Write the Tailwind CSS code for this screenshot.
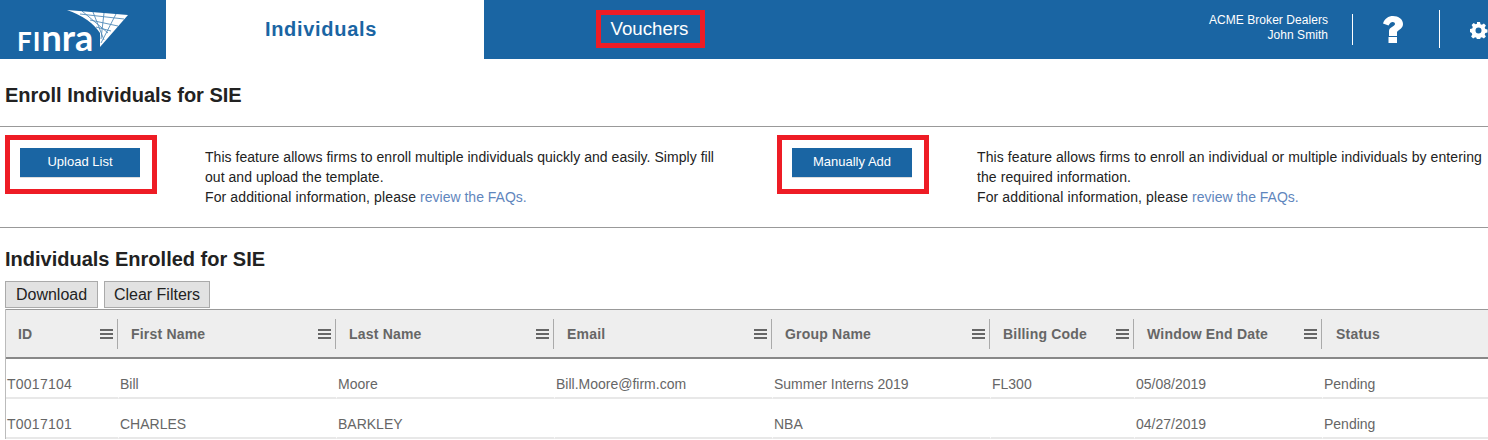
<!DOCTYPE html>
<html lang="en">
<head>
    <meta charset="UTF-8">
    <meta name="viewport" content="width=device-width, initial-scale=1.0">
    <title>Enroll Individuals for SIE</title>
    <script src="https://cdn.jsdelivr.net/npm/@tailwindcss/browser@4"></script>
</head>
<body class="bg-white w-[1488px] h-[440px] overflow-hidden font-['Liberation_Sans',Arial,sans-serif] text-[#222]">
    <!-- top nav -->
    <header class="h-[59px] bg-[#1a65a3] flex items-stretch text-white">
        <div class="w-[166px] relative">
            <span class="absolute left-[17px] top-[21px] font-['Lato',sans-serif] font-bold leading-[32px] whitespace-nowrap h-[32px] flex items-baseline"><span class="text-[26px] tracking-[1px]">FI</span><span class="text-[36px]">nra</span></span>
            <svg class="absolute left-[66px] top-[9px]" width="66" height="40" viewBox="0 0 66 40">
                <path d="M1 1 L62 6 L34 38 L34 24 Q24 9 1 1Z" fill="#fff"/>
                <g stroke="#1a65a3" stroke-width="0.9" fill="none" opacity="0.75">
                    <path d="M16 2 L42 24"/>
                    <path d="M27 3 L38 31"/>
                    <path d="M38 4 L35 30"/>
                    <path d="M50 5 L35 34"/>
                    <path d="M14 5 L58 10"/>
                    <path d="M24 11 L52 17"/>
                    <path d="M30 18 L45 22"/>
                </g>
            </svg>
        </div>
        <div class="w-[318px] bg-white flex justify-center pt-[18px] pr-[8px] text-[#1a65a3] text-[20px] leading-[23px] font-bold tracking-[0.7px]">Individuals</div>
        <div class="ml-[112px] mt-[10px] w-[109px] h-[38px] border-[5px] border-[#ee1c25] flex items-center justify-center pr-[2px] text-[18.7px]">Vouchers</div>
        <div class="ml-auto w-[160px] pt-[13px] text-right text-[12px] leading-[15px] tracking-[0.05px] mr-[160px]">
            <div>ACME Broker Dealers</div>
            <div>John Smith</div>
        </div>
    </header>
    <div class="absolute top-[14px] left-[1352px] w-px h-[31px] bg-white"></div>
    <div class="absolute top-[10px] left-[1439px] w-px h-[38px] bg-white"></div>
    <svg class="absolute top-[16px] left-[1383px]" width="20" height="27" viewBox="0 0 20 27">
        <path fill="#fff" d="M0 7.5C1.5 2.5 5.5 0 10 0c5.500 0 10 3 10 8 0 4.500-4 5.500-6 8v4H6v-5c0-4 6-4.500 6-7 0-1.200-1-2-2.300-2C8 6 7 7 5.500 9.500zM5.500 21h8.500v6H5.500z"/>
    </svg>
    <svg class="absolute top-[21px] left-[1470px]" width="18" height="18" viewBox="0 0 18 18">
        <path fill="#fff" fill-rule="evenodd" d="M7 1h3l.5 2.200 1.400.6 2-1.200 2 2-1.200 2 .6 1.400 2.200.5v3l-2.200.5-.6 1.400 1.200 2-2 2-2-1.200-1.400.6-.5 2.200H7l-.5-2.200-1.400-.6-2 1.200-2-2 1.200-2-.6-1.400L0 11V8l2.200-.5.6-1.400-1.200-2 2-2 2 1.200 1.400-.6zM8.500 6.500a3 3 0 1 0 0 6 3 3 0 0 0 0-6z"/>
    </svg>

    <main>
        <h1 class="ml-[5px] mt-[25px] text-[20px] leading-[23px] font-bold">Enroll Individuals for SIE</h1>
        <hr class="mt-[19px] border-[#999]">
        <section class="flex h-[100px]">
            <div class="w-[772px] flex">
                <div class="ml-[5px] mt-[8px] w-[152px] h-[59px] border-[5px] border-[#ee1c25] flex items-start pl-[10px] pt-[8px]">
                    <button class="w-[120px] h-[29px] pb-[1px] bg-[#1a65a3] text-white text-[13px] shadow-[0_1px_0_#ddd]">Upload List</button>
                </div>
                <p class="ml-[48px] mt-[20px] w-[515px] text-[14px] leading-[20px] tracking-[0.04px]">This feature allows firms to enroll multiple individuals quickly and easily. Simply fill out and upload the template.<br><span class="tracking-[0.12px]">For additional information, please <a href="#" class="tracking-[0px] text-[#5f86bd]">review the FAQs.</a></span></p>
            </div>
            <div class="flex-1 flex">
                <div class="ml-[5px] mt-[8px] w-[152px] h-[59px] border-[5px] border-[#ee1c25] flex items-start pl-[10px] pt-[8px]">
                    <button class="w-[120px] h-[29px] pb-[1px] bg-[#1a65a3] text-white text-[13px] shadow-[0_1px_0_#ddd]">Manually Add</button>
                </div>
                <p class="ml-[48px] mt-[20px] w-[510px] text-[14px] leading-[20px] tracking-[0.09px]">This feature allows firms to enroll an individual or multiple individuals by entering the required information.<br><span class="tracking-[0.12px]">For additional information, please <a href="#" class="tracking-[0px] text-[#5f86bd]">review the FAQs.</a></span></p>
            </div>
        </section>
        <hr class="border-[#999]">
        <h2 class="ml-[5px] mt-[20px] text-[20px] leading-[23px] font-bold">Individuals Enrolled for SIE</h2>
        <div class="ml-[5px] mt-[10px] flex gap-[6px]">
            <button class="w-[93px] h-[27px] bg-[#e2e2e2] border border-[#aaa] text-[16px] leading-[24px]">Download</button>
            <button class="w-[106px] h-[27px] bg-[#e2e2e2] border border-[#aaa] text-[16px] leading-[24px]">Clear Filters</button>
        </div>
        <!-- grid -->
        <div class="ml-[5px] mt-px w-[1490px] border-l border-[#bbb]">
            <div class="h-[50px] bg-[#eee] border-t border-b-2 border-[#999] border-b-[#888] flex text-[14px] font-bold text-[#666] items-center tracking-[0.2px]">
                <div class="w-[112px] h-[30px] flex items-center pl-[12px] pr-[4px] border-r border-[#aaa]"><span class="flex-1 pt-[2px]">ID</span><svg width="13" height="10" viewBox="0 0 13 10" fill="#666"><path d="M0 0h13v2H0zM0 4h13v2H0zM0 8h13v2H0z"/></svg></div>
                <div class="w-[218px] h-[30px] flex items-center pl-[13px] pr-[4px] border-r border-[#aaa]"><span class="flex-1 pt-[2px]">First Name</span><svg width="13" height="10" viewBox="0 0 13 10" fill="#666"><path d="M0 0h13v2H0zM0 4h13v2H0zM0 8h13v2H0z"/></svg></div>
                <div class="w-[218px] h-[30px] flex items-center pl-[13px] pr-[4px] border-r border-[#aaa]"><span class="flex-1 pt-[2px]">Last Name</span><svg width="13" height="10" viewBox="0 0 13 10" fill="#666"><path d="M0 0h13v2H0zM0 4h13v2H0zM0 8h13v2H0z"/></svg></div>
                <div class="w-[218px] h-[30px] flex items-center pl-[13px] pr-[4px] border-r border-[#aaa]"><span class="flex-1 pt-[2px]">Email</span><svg width="13" height="10" viewBox="0 0 13 10" fill="#666"><path d="M0 0h13v2H0zM0 4h13v2H0zM0 8h13v2H0z"/></svg></div>
                <div class="w-[218px] h-[30px] flex items-center pl-[13px] pr-[4px] border-r border-[#aaa]"><span class="flex-1 pt-[2px]">Group Name</span><svg width="13" height="10" viewBox="0 0 13 10" fill="#666"><path d="M0 0h13v2H0zM0 4h13v2H0zM0 8h13v2H0z"/></svg></div>
                <div class="w-[144px] h-[30px] flex items-center pl-[13px] pr-[4px] border-r border-[#aaa]"><span class="flex-1 pt-[2px]">Billing Code</span><svg width="13" height="10" viewBox="0 0 13 10" fill="#666"><path d="M0 0h13v2H0zM0 4h13v2H0zM0 8h13v2H0z"/></svg></div>
                <div class="w-[188px] h-[30px] flex items-center pl-[13px] pr-[4px] border-r border-[#aaa]"><span class="flex-1 pt-[2px]">Window End Date</span><svg width="13" height="10" viewBox="0 0 13 10" fill="#666"><path d="M0 0h13v2H0zM0 4h13v2H0zM0 8h13v2H0z"/></svg></div>
                <div class="pl-[14px] pt-[2px]">Status</div>
            </div>
            <div class="h-[40px] flex text-[14px] leading-[16px] text-[#666]">
                <div class="w-[113px] pl-[1px] pt-[17px] tracking-[0.25px] border-b-2 border-b-[#e8e8e8] border-r border-r-white">T0017104</div><div class="w-[218px] pl-[1px] pt-[17px] border-b-2 border-b-[#e8e8e8] border-r border-r-white">Bill</div><div class="w-[218px] pl-[1px] pt-[17px] border-b-2 border-b-[#e8e8e8] border-r border-r-white">Moore</div><div class="w-[218px] pl-[1px] pt-[17px] border-b-2 border-b-[#e8e8e8] border-r border-r-white">Bill.Moore@firm.com</div><div class="w-[218px] pl-[1px] pt-[17px] border-b-2 border-b-[#e8e8e8] border-r border-r-white">Summer Interns 2019</div><div class="w-[144px] pl-[1px] pt-[17px] border-b-2 border-b-[#e8e8e8] border-r border-r-white">FL300</div><div class="w-[188px] pl-[1px] pt-[17px] border-b-2 border-b-[#e8e8e8] border-r border-r-white">05/08/2019</div><div class="flex-1 pl-[1px] pt-[17px] border-b-2 border-b-[#e8e8e8]">Pending</div>
            </div>
            <div class="h-[40px] flex text-[14px] leading-[16px] text-[#666]">
                <div class="w-[113px] pl-[1px] pt-[17px] tracking-[0.25px] border-b-2 border-b-[#e8e8e8] border-r border-r-white">T0017101</div><div class="w-[218px] pl-[1px] pt-[17px] border-b-2 border-b-[#e8e8e8] border-r border-r-white">CHARLES</div><div class="w-[218px] pl-[1px] pt-[17px] border-b-2 border-b-[#e8e8e8] border-r border-r-white">BARKLEY</div><div class="w-[218px] pl-[1px] pt-[17px] border-b-2 border-b-[#e8e8e8] border-r border-r-white"></div><div class="w-[218px] pl-[1px] pt-[17px] border-b-2 border-b-[#e8e8e8] border-r border-r-white">NBA</div><div class="w-[144px] pl-[1px] pt-[17px] border-b-2 border-b-[#e8e8e8] border-r border-r-white"></div><div class="w-[188px] pl-[1px] pt-[17px] border-b-2 border-b-[#e8e8e8] border-r border-r-white">04/27/2019</div><div class="flex-1 pl-[1px] pt-[17px] border-b-2 border-b-[#e8e8e8]">Pending</div>
            </div>
        </div>
    </main>
</body>
</html>
